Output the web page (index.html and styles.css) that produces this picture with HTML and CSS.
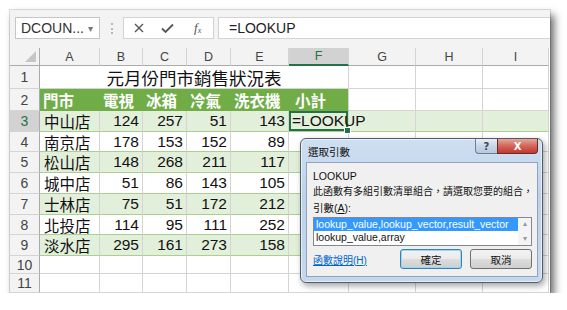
FILE: index.html
```html
<!DOCTYPE html>
<html>
<head>
<meta charset="utf-8">
<link rel="stylesheet" href="styles.css">
</head>
<body>
<div class="window">
  <div class="fbar">
    <div class="namebox"><span>DCOUN...</span><span class="dd">▾</span></div>
    <div class="grip"><i></i><i></i><i></i></div>
    <div class="fbtns">
      <svg class="ico ico-x" width="10" height="10" viewBox="0 0 10 10"><path d="M1 1L9 9M9 1L1 9" stroke="#555" stroke-width="1.4" fill="none"/></svg>
      <svg class="ico ico-ok" width="13" height="10" viewBox="0 0 13 10"><path d="M1 5.5L4.5 9L12 1.5" stroke="#555" stroke-width="1.8" fill="none"/></svg>
      <span class="fx"><i>f</i><sub>x</sub></span>
    </div>
    <div class="finput">=LOOKUP</div>
  </div>
  <div class="sheet">
    <div class="corner"></div>
    <div class="ch">A</div><div class="ch">B</div><div class="ch">C</div><div class="ch">D</div><div class="ch">E</div><div class="ch sel">F</div><div class="ch">G</div><div class="ch">H</div><div class="ch">I</div>

    <div class="rh">1</div><div class="cell title">元月份門市銷售狀況表</div><div class="cell"></div><div class="cell"></div><div class="cell"></div>

    <div class="rh">2</div><div class="cell hd">門市</div><div class="cell hd">電視</div><div class="cell hd">冰箱</div><div class="cell hd">冷氣</div><div class="cell hd">洗衣機</div><div class="cell hd hdf">小計</div><div class="cell"></div><div class="cell"></div><div class="cell"></div>

    <div class="rh rsel">3</div><div class="cell t band">中山店</div><div class="cell t band num">124</div><div class="cell t band num">257</div><div class="cell t band num">51</div><div class="cell t band num">143</div><div class="cell t band active">=LOOKUP</div><div class="cell t band"></div><div class="cell t band"></div><div class="cell t band"></div>

    <div class="rh">4</div><div class="cell t">南京店</div><div class="cell t num">178</div><div class="cell t num">153</div><div class="cell t num">152</div><div class="cell t num">89</div><div class="cell t"></div><div class="cell"></div><div class="cell"></div><div class="cell"></div>

    <div class="rh">5</div><div class="cell t band">松山店</div><div class="cell t band num">148</div><div class="cell t band num">268</div><div class="cell t band num">211</div><div class="cell t band num">117</div><div class="cell t band"></div><div class="cell"></div><div class="cell"></div><div class="cell"></div>

    <div class="rh">6</div><div class="cell t">城中店</div><div class="cell t num">51</div><div class="cell t num">86</div><div class="cell t num">143</div><div class="cell t num">105</div><div class="cell t"></div><div class="cell"></div><div class="cell"></div><div class="cell"></div>

    <div class="rh">7</div><div class="cell t band">士林店</div><div class="cell t band num">75</div><div class="cell t band num">51</div><div class="cell t band num">172</div><div class="cell t band num">212</div><div class="cell t band"></div><div class="cell"></div><div class="cell"></div><div class="cell"></div>

    <div class="rh">8</div><div class="cell t">北投店</div><div class="cell t num">114</div><div class="cell t num">95</div><div class="cell t num">111</div><div class="cell t num">252</div><div class="cell t"></div><div class="cell"></div><div class="cell"></div><div class="cell"></div>

    <div class="rh">9</div><div class="cell t band">淡水店</div><div class="cell t band num">295</div><div class="cell t band num">161</div><div class="cell t band num">273</div><div class="cell t band num">158</div><div class="cell t band"></div><div class="cell"></div><div class="cell"></div><div class="cell"></div>

    <div class="rh">10</div><div class="cell"></div><div class="cell"></div><div class="cell"></div><div class="cell"></div><div class="cell"></div><div class="cell"></div><div class="cell"></div><div class="cell"></div><div class="cell"></div>

    <div class="rh">11</div><div class="cell"></div><div class="cell"></div><div class="cell"></div><div class="cell"></div><div class="cell"></div><div class="cell"></div><div class="cell"></div><div class="cell"></div><div class="cell"></div>
  </div>

  <div class="dialog">
    <div class="dtitle">
      <span class="dname">選取引數</span>
      <div class="dbtns">
        <div class="bhelp">?</div>
        <div class="bclose">X</div>
      </div>
    </div>
    <div class="client">
      <div class="line">LOOKUP</div>
      <div class="line cjk">此函數有多組引數清單組合，請選取您要的組合，</div>
      <div class="line">引數(<u>A</u>):</div>
      <div class="listbox">
        <div class="items">
          <div class="item selitem">lookup_value,lookup_vector,result_vector</div>
          <div class="item">lookup_value,array</div>
        </div>
        <div class="vscroll"><span>▴</span><span>▾</span></div>
      </div>
      <div class="bottom">
        <a class="link">函數說明(<u>H</u>)</a>
        <div class="btns">
          <div class="btn def">確定</div>
          <div class="btn">取消</div>
        </div>
      </div>
    </div>
  </div>
</div>
</body>
</html>
```

FILE: styles.css
```css
body {
  margin: 0;
  background: #fff;
  font-family: "Liberation Sans", "Noto Sans CJK TC", sans-serif;
}

.window {
  position: relative;
  margin: 10px 0 0 10px;
  width: 540px;
  height: 283px;
  background: #f3f3f3;
  box-shadow: 0 0 0 1px rgba(0,0,0,0.12), 4px 5px 8px rgba(0,0,0,0.6);
  display: flex;
  flex-direction: column;
  overflow: hidden;
}

/* formula bar */
.fbar {
  height: 38px;
  flex: none;
  box-sizing: border-box;
  padding: 7px 0 0 5px;
  display: flex;
  align-items: flex-start;
}
.namebox {
  width: 85px;
  height: 22px;
  box-sizing: border-box;
  background: #fff;
  border: 1px solid #c6c6c6;
  display: flex;
  align-items: center;
  justify-content: space-between;
  padding: 0 6px 0 5px;
  font-size: 14px;
  color: #333;
}
.dd { font-size: 10px; color: #777; }
.grip {
  margin: 6px 0 0 11px;
  width: 2px;
  height: 11px;
  display: flex;
  flex-direction: column;
  justify-content: space-between;
}
.grip i { display: block; width: 2px; height: 2px; background: #b8b8b8; }
.fbtns {
  margin-left: 10px;
  width: 91px;
  height: 22px;
  box-sizing: border-box;
  background: #fff;
  border: 1px solid #d4d4d4;
  display: flex;
  align-items: center;
}
.ico-x { margin-left: 10px; }
.ico-ok { margin-left: 17px; }
.fx {
  margin-left: 20px;
  font-family: "Liberation Serif", serif;
  font-size: 13px;
  color: #555;
}
.fx sub { font-size: 8px; font-style: italic; vertical-align: -1px; }
.finput {
  margin-left: 4px;
  flex: 1;
  height: 22px;
  box-sizing: border-box;
  background: #fff;
  border: 1px solid #d4d4d4;
  border-right: none;
  padding-left: 10px;
  font-size: 14px;
  line-height: 20px;
  color: #222;
}

/* sheet */
.sheet {
  display: grid;
  grid-template-columns: 30px 60px 43px 44px 44px 58px 60px 67px 67px 66px;
  grid-template-rows: 18px 23px 22px 21px 20px 21px 21px 21px 20px 21px 18px 19px;
  background: #fff;
}
.sheet > div { box-sizing: border-box; }
.corner {
  background: #f3f3f3;
  border-right: 1px solid #ababab;
  border-bottom: 1px solid #ababab;
  position: relative;
}
.corner::after {
  content: "";
  position: absolute;
  right: 3px;
  bottom: 3px;
  border-style: solid;
  border-width: 0 0 11px 11px;
  border-color: transparent transparent #c6c6c6 transparent;
}
.ch {
  background: #f3f3f3;
  border-right: 1px solid #d4d4d4;
  border-bottom: 1px solid #ababab;
  font-size: 12.5px;
  color: #444;
  display: flex;
  align-items: center;
  justify-content: center;
}
.ch.sel {
  background: #d2d2d2;
  color: #217346;
  border-bottom: 2px solid #217346;
}
.rh {
  background: #f3f3f3;
  border-right: 1px solid #ababab;
  border-bottom: 1px solid #d4d4d4;
  font-size: 14px;
  color: #444;
  display: flex;
  align-items: center;
  justify-content: center;
}
.rh.rsel {
  background: #d2d2d2;
  color: #217346;
}
.cell {
  border-right: 1px solid #d4d4d4;
  border-bottom: 1px solid #d4d4d4;
  font-size: 15.5px;
  color: #111;
  display: flex;
  align-items: center;
  padding-left: 4px;
  white-space: nowrap;
}
.title {
  grid-column: span 6;
  justify-content: center;
  font-size: 17.5px;
  padding-left: 0;
}
.hd {
  background: #70ad47;
  border-right-color: #70ad47;
  border-bottom-color: #70ad47;
  color: #fff;
  font-weight: bold;
  padding-left: 3px;
}
.hdf { padding-left: 6px; border-right-color: #d4d4d4; }
.t { border-bottom-color: #a9d08e; }
.band { background: #e2efda; }
.num { justify-content: flex-end; padding-left: 0; padding-right: 3px; }
.active {
  z-index: 1;
  position: relative;
  overflow: visible;
  padding-left: 3px;
  box-shadow: inset 0 0 0 2px #217346;
}
.active::after {
  content: "";
  position: absolute;
  right: -3px;
  bottom: -3px;
  width: 5px;
  height: 5px;
  background: #217346;
  border: 1px solid #fff;
}

/* dialog */
.dialog {
  position: absolute;
  left: 290px;
  top: 128px;
  width: 243px;
  height: 145px;
  box-sizing: border-box;
  border: 1px solid #4d5b6b;
  border-radius: 6px;
  background: linear-gradient(#cfdff1, #bdd2ea 40%, #c6d8ee);
  box-shadow: inset 0 0 0 1px rgba(255,255,255,0.6), 2px 3px 6px rgba(0,0,0,0.35);
  display: flex;
  flex-direction: column;
  padding: 0 4px 5px 5px;
}
.dtitle {
  height: 23px;
  flex: none;
  display: flex;
  justify-content: space-between;
  align-items: flex-start;
}
.dname {
  margin: 5px 0 0 2px;
  font-size: 10.5px;
  color: #111;
}
.dbtns { display: flex; }
.bhelp, .bclose {
  height: 15px;
  box-sizing: border-box;
  display: flex;
  align-items: center;
  justify-content: center;
  font-family: "DejaVu Sans", sans-serif;
  font-weight: bold;
}
.bhelp {
  width: 22px;
  border: 1px solid #6e7f95;
  border-top: none;
  border-right: none;
  border-radius: 0 0 0 4px;
  background: linear-gradient(#e7eef7, #c9d6e7 50%, #b7c8de);
  font-size: 10px;
  color: #3b4756;
}
.bclose {
  width: 41px;
  border: 1px solid #6b2b24;
  border-top: none;
  border-radius: 0 0 4px 0;
  background: linear-gradient(#e8a599, #d2665a 50%, #c2392c);
  font-size: 10px;
  color: #fff;
}
.client {
  flex: 1;
  background: #f0f0f0;
  border: 1px solid #8fa3bd;
  padding: 5px 5px 0 6px;
  display: flex;
  flex-direction: column;
  font-size: 10.5px;
  color: #111;
}
.line { height: 16px; line-height: 16px; white-space: nowrap; }
.cjk { font-size: 10px; }
.listbox {
  margin-top: 1px;
  height: 29px;
  box-sizing: border-box;
  border: 1px solid #828790;
  background: #fff;
  display: flex;
}
.items { flex: 1; padding-top: 0; }
.item {
  height: 13px;
  line-height: 13px;
  padding-left: 2px;
  font-size: 10.5px;
  color: #111;
  white-space: nowrap;
}
.selitem { background: #3399ff; color: #fff; }
.vscroll {
  width: 13px;
  display: flex;
  flex-direction: column;
  justify-content: space-between;
  align-items: center;
  font-size: 8px;
  line-height: 12px;
  color: #999;
  background: #f4f4f4;
}
.bottom {
  margin-top: 3px;
  display: flex;
  align-items: center;
  justify-content: space-between;
}
.link {
  color: #0066cc;
  text-decoration: underline;
  font-size: 10px;
}
.link u { text-decoration: none; }
.btns { display: flex; gap: 8px; }
.btn {
  width: 62px;
  height: 20px;
  box-sizing: border-box;
  border: 1px solid #707070;
  border-radius: 3px;
  background: linear-gradient(#f2f2f2, #ebebeb 50%, #dddddd 51%, #cfcfcf);
  display: flex;
  align-items: center;
  justify-content: center;
  font-size: 10.5px;
  color: #111;
}
.btn.def {
  border-color: #3c7fb1;
  box-shadow: inset 0 0 0 1px #9ad7f5;
}
```
